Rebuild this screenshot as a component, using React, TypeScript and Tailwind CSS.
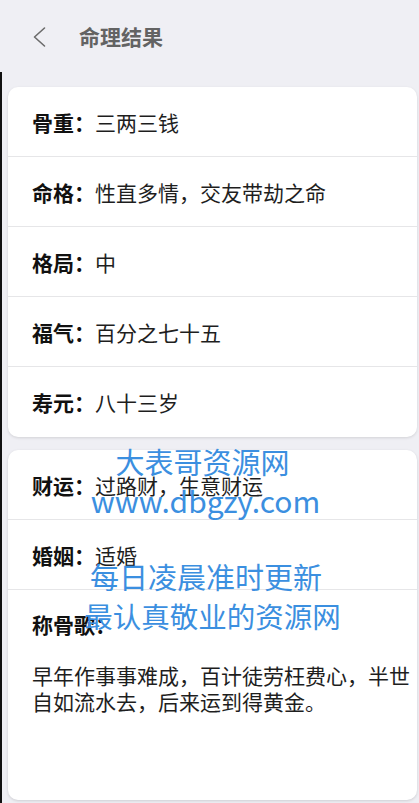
import React from "react";

const rows1 = [
  ["骨重：", "三两三钱"],
  ["命格：", "性直多情，交友带劫之命"],
  ["格局：", "中"],
  ["福气：", "百分之七十五"],
  ["寿元：", "八十三岁"],
];

const rows2 = [
  ["财运：", "过路财，生意财运"],
  ["婚姻：", "适婚"],
];

function Row({ label, value, last }: { label: string; value: string; last?: boolean }) {
  return (
    <div className={"h-[70px] flex items-center pl-[24px] " + (last ? "" : "border-b border-[#e6e6e8]")}>
      <span className="font-bold text-[#111] text-[21px] leading-[26px]">{label}</span>
      <span className="text-[#1e1e1e] text-[21px] leading-[26px]">{value}</span>
    </div>
  );
}

export default function App() {
  return (
    <div
      className="relative min-h-screen bg-[#efeff4] overflow-hidden"
      style={{ fontFamily: '"Noto Sans CJK SC", "Noto Sans", sans-serif' }}
    >
      <div className="h-[72px] flex items-start pt-[25px] pl-[32px]">
        <svg width="14" height="22" viewBox="0 0 14 22" className="mt-[1px]">
          <path d="M12.5 2 L2.5 11 L12.5 20" fill="none" stroke="#6b6b6b" strokeWidth="1.6" strokeLinecap="round" strokeLinejoin="round" />
        </svg>
        <span className="ml-[33px] text-[21px] leading-[22px] font-bold text-[#636363]">命理结果</span>
      </div>
      <div className="border-l-[2px] border-[#111] pl-[6px] pr-[2px] pt-[15px] pb-[3px] min-h-[731px]">
        <div className="bg-white rounded-[10px] shadow-[0_1px_3px_rgba(0,0,0,0.12)]">
          {rows1.map((r, i) => (
            <Row key={i} label={r[0]} value={r[1]} last={i === rows1.length - 1} />
          ))}
        </div>
        <div className="mt-[13px] bg-white rounded-[10px] shadow-[0_1px_3px_rgba(0,0,0,0.14)] h-[350px]">
          {rows2.map((r, i) => (
            <Row key={i} label={r[0]} value={r[1]} />
          ))}
          <div className="pt-[21px] pl-[24px] pr-[4px]">
            <div className="font-bold text-[#111] text-[21px] leading-[26px]">称骨歌：</div>
            <div className="mt-[25px] text-[#1e1e1e] text-[21px] leading-[26px]">
              早年作事事难成，百计徒劳枉费心，半世自如流水去，后来运到得黄金。
            </div>
          </div>
        </div>
      </div>
      <div className="pointer-events-none absolute left-0 right-0 top-[442px] flex flex-col items-center text-[#3b8fe0] text-[29px] leading-[39px]">
        <div className="pr-[14px]">大表哥资源网</div>
        <div className="pr-[8px] text-[30px]">www.dbgzy.com</div>
      </div>
      <div className="pointer-events-none absolute left-0 right-0 top-[557px] flex flex-col items-center text-[#3b8fe0] text-[29px] leading-[39px]">
        <div className="pr-[7px]">每日凌晨准时更新</div>
        <div className="pl-[6px] text-[28.5px]">最认真敬业的资源网</div>
      </div>
    </div>
  );
}
